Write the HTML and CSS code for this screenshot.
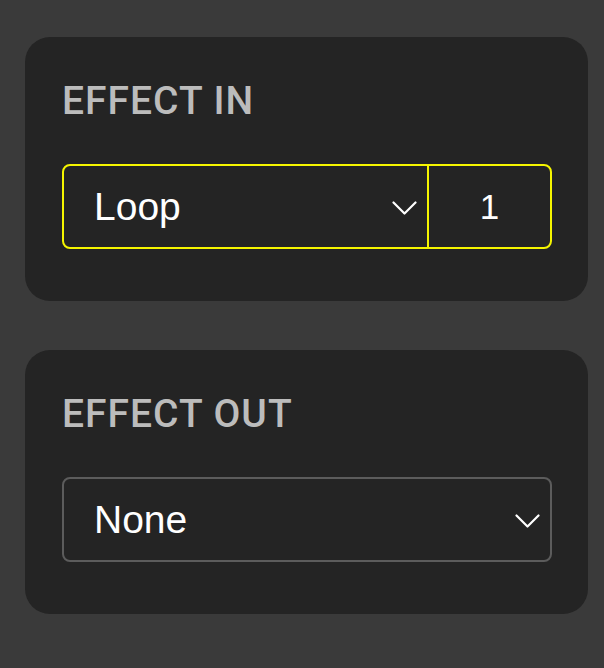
FILE: index.html
```html
<!DOCTYPE html>
<html lang="en">
<head>
<meta charset="utf-8">
<title>Effects</title>
<link rel="stylesheet" href="styles.css">
</head>
<body>
<div class="panel">
  <section class="card">
    <h2 class="label">EFFECT IN</h2>
    <div class="field field-active">
      <div class="select">
        <span class="select-value">Loop</span>
        <svg class="chevron" width="25" height="14" viewBox="0 0 25 14"><polyline points="1.5,1.5 12.5,12.5 23.5,1.5" fill="none" stroke="#ffffff" stroke-width="2.2" stroke-linecap="round" stroke-linejoin="round"/></svg>
      </div>
      <div class="count">1</div>
    </div>
  </section>
  <section class="card">
    <h2 class="label">EFFECT OUT</h2>
    <div class="field">
      <div class="select">
        <span class="select-value">None</span>
        <svg class="chevron" width="25" height="14" viewBox="0 0 25 14"><polyline points="1.5,1.5 12.5,12.5 23.5,1.5" fill="none" stroke="#ffffff" stroke-width="2.2" stroke-linecap="round" stroke-linejoin="round"/></svg>
      </div>
    </div>
  </section>
</div>
</body>
</html>
```
FILE: styles.css
```css
html, body {
  margin: 0;
  padding: 0;
  background: #3a3a3a;
}

body {
  font-family: "Liberation Sans", Arial, sans-serif;
  color: #ffffff;
  width: 604px;
  height: 668px;
  overflow: hidden;
}

.panel {
  display: flex;
  flex-direction: column;
  gap: 49px;
  padding: 37px 16px 0 25px;
}

.card {
  background: #242424;
  border-radius: 25px;
  padding: 44px 36px 52px 37px;
}

.label {
  margin: 0 0 43px 0;
  font-family: Roboto, "Liberation Sans", sans-serif;
  font-size: 39px;
  line-height: 40px;
  font-weight: 500;
  letter-spacing: 1px;
  color: #bcbcbc;
}

.field {
  display: flex;
  height: 85px;
  box-sizing: border-box;
  border: 2px solid #5c5c5c;
  border-radius: 8px;
}

.field-active {
  border-color: #f5f500;
}

.select {
  flex: 1;
  display: flex;
  align-items: center;
  justify-content: space-between;
  padding: 0 10px 0 30px;
}

.select-value {
  font-size: 39px;
  line-height: 1;
}

.chevron {
  display: block;
  margin-top: 2px;
}

.count {
  width: 123px;
  box-sizing: border-box;
  border-left: 2px solid #f5f500;
  display: flex;
  align-items: center;
  justify-content: center;
  font-size: 35px;
  line-height: 1;
}
```
